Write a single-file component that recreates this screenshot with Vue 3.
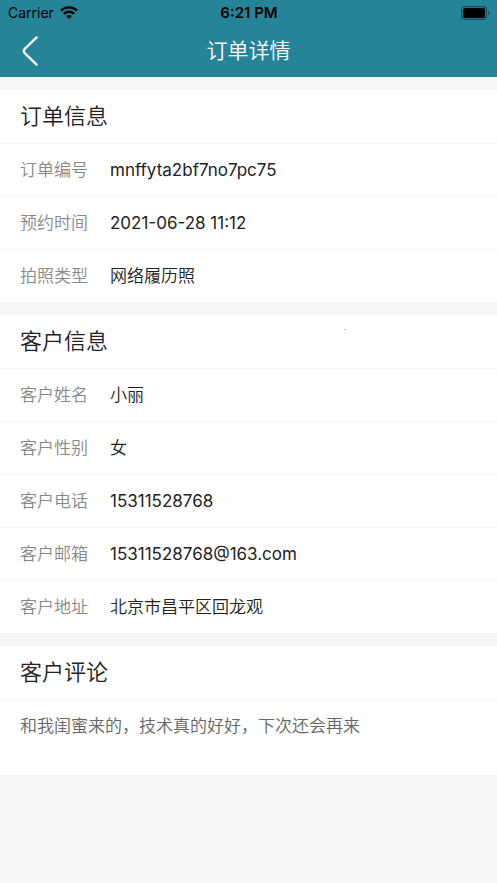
<script setup>
const sections = [
  {
    title: '订单信息',
    rows: [
      { label: '订单编号', value: 'mnffyta2bf7no7pc75', latin: true },
      { label: '预约时间', value: '2021-06-28 11:12', latin: true },
      { label: '拍照类型', value: '网络履历照' },
    ],
  },
  {
    title: '客户信息',
    mark: true,
    rows: [
      { label: '客户姓名', value: '小丽' },
      { label: '客户性别', value: '女' },
      { label: '客户电话', value: '15311528768', latin: true },
      { label: '客户邮箱', value: '15311528768@163.com', latin: true },
      { label: '客户地址', value: '北京市昌平区回龙观' },
    ],
  },
]
const comment = '和我闺蜜来的，技术真的好好，下次还会再来'
</script>

<template>
  <div class="page">
    <header class="top">
      <div class="status">
        <div class="carrier">
          <span>Carrier</span>
          <svg width="18" height="13" viewBox="0 0 18 13" aria-hidden="true">
            <g fill="none" stroke="#000" stroke-width="2.4">
              <path d="M0.9 4.7C5.4 0.3 12.6 0.3 17.1 4.7" />
              <path d="M3.9 7.8C6.8 5 11.2 5 14.1 7.8" />
            </g>
            <path d="M6.1 10.1C7.8 8.6 10.2 8.6 11.9 10.1L9 13Z" fill="#000" />
          </svg>
        </div>
        <span class="time">6:21 PM</span>
        <svg class="battery" width="29" height="14" viewBox="0 0 29 14" aria-hidden="true">
          <rect x="0.6" y="0.6" width="24.8" height="12.8" rx="3.4" fill="none" stroke="#124d58" stroke-width="1.1" />
          <rect x="2" y="2" width="22" height="10" rx="2" fill="#000" />
          <path d="M27 4.8C28.8 5.5 28.8 8.5 27 9.2Z" fill="#124d58" />
        </svg>
      </div>
      <nav class="nav">
        <button class="back" type="button" aria-label="返回">
          <svg width="18" height="32" viewBox="0 0 18 32" aria-hidden="true">
            <path d="M14.6 2.4L2.6 14Q1 16 2.6 18L14.6 29.6" fill="none" stroke="#fff" stroke-width="2.4" stroke-linecap="round" />
          </svg>
        </button>
        <h1>订单详情</h1>
      </nav>
    </header>

    <main class="content">
      <section v-for="section in sections" :key="section.title" class="card">
        <h2>{{ section.title }}</h2>
        <span v-if="section.mark" class="mark"></span>
        <dl>
          <div v-for="row in section.rows" :key="row.label" class="row">
            <dt>{{ row.label }}</dt>
            <dd :class="{ latin: row.latin }">{{ row.value }}</dd>
          </div>
        </dl>
      </section>
      <section class="card">
        <h2>客户评论</h2>
        <p class="comment">{{ comment }}</p>
      </section>
    </main>
  </div>
</template>

<style>
body {
  margin: 0;
  background: #f5f5f5;
}
</style>

<style scoped>
.page {
  font-family: Inter, "Noto Sans CJK SC", sans-serif;
  font-size: 17px;
  font-weight: 350;
  color: #222;
}
.top {
  background: #268498;
}
.status {
  display: grid;
  grid-template-columns: 1fr auto 1fr;
  align-items: center;
  height: 25px;
  padding: 0 7px 0 8px;
  font-size: 14px;
  font-weight: 400;
  color: #000;
}
.carrier {
  display: flex;
  align-items: center;
  gap: 6px;
}
.time {
  font-size: 15px;
  font-weight: 600;
}
.battery {
  justify-self: end;
}
.nav {
  display: grid;
  grid-template-columns: 44px 1fr 44px;
  align-items: center;
  height: 52px;
}
.back {
  display: flex;
  padding: 0 0 0 22px;
  border: 0;
  background: none;
  cursor: pointer;
}
h1 {
  margin: 0;
  text-align: center;
  font-size: 21px;
  line-height: 52px;
  font-weight: 350;
  color: #fff;
}
.content {
  display: flex;
  flex-direction: column;
  gap: 13px;
  padding: 13px 0;
}
.card {
  position: relative;
  background: #fff;
}
h2 {
  margin: 0;
  padding: 0 20px;
  font-size: 22px;
  line-height: 53px;
  font-weight: 350;
}
dl {
  margin: 0;
}
.row {
  display: flex;
  gap: 22px;
  padding: 0 20px;
  border-top: 1px solid #f8f8f8;
  line-height: 52px;
}
dt {
  flex: none;
  color: #888;
}
dd {
  margin: 0;
}
.latin {
  font-weight: 400;
}
.mark {
  position: absolute;
  top: 14px;
  left: 344px;
  width: 2px;
  height: 1px;
  background: #a9cdd4;
}
.comment {
  margin: 0;
  padding: 0 20px 23px;
  border-top: 1px solid #f8f8f8;
  line-height: 52px;
  color: #666;
}
</style>
